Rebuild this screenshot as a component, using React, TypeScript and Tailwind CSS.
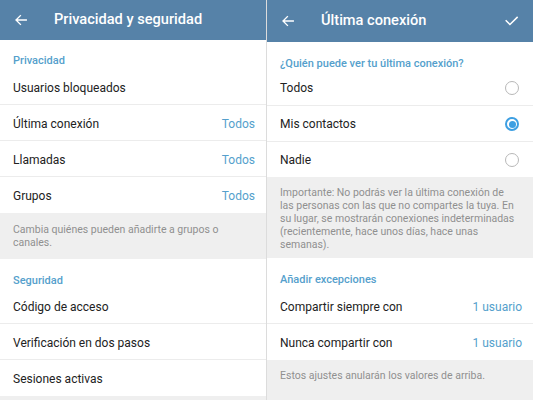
import React from 'react';

const ArrowLeft = () => (
  <svg width="14" height="14" viewBox="0 0 24 24" fill="none" stroke="white" strokeWidth="2.4" strokeLinecap="square">
    <path d="M21 12H4M11 4.5L3.5 12l7.5 7.5" />
  </svg>
);

const Check = () => (
  <svg width="15" height="15" viewBox="0 0 24 24" fill="none" stroke="white" strokeWidth="2.4" strokeLinecap="square">
    <path d="M3.5 12.5l6 6L21 7" />
  </svg>
);

const Header = ({ title, h, check }: { title: string; h: string; check?: boolean }) => (
  <div className={`${h} bg-[#5682a8] flex items-center pl-[14px] pr-[14px]`}>
    <ArrowLeft />
    <span className="ml-[26px] text-[14.6px] font-medium text-white">{title}</span>
    {check && <span className="ml-auto"><Check /></span>}
  </div>
);

const SectionTitle = ({ text, cls }: { text: string; cls: string }) => (
  <div className={`${cls} px-[13px]`}>
    <div className="text-[11px] leading-[14px] font-medium text-[#559fcc]">{text}</div>
  </div>
);

const Row = ({ label, value, last, h = 'h-[36px]' }: { label: string; value?: React.ReactNode; last?: boolean; h?: string }) => (
  <div className={`${h} flex items-center justify-between pl-[13px] pr-[11px] pt-[2px] ${last ? '' : 'border-b border-[#ececec]'}`}>
    <span className="text-[12px] text-[#222]">{label}</span>
    {value && <span className="text-[12px] text-[#559fcc]">{value}</span>}
  </div>
);

const Radio = ({ on }: { on?: boolean }) =>
  on ? (
    <span className="block shrink-0 w-[14px] h-[14px] rounded-full border-2 border-[#3d9fe2] flex items-center justify-center mr-[3px]">
      <span className="block w-[7px] h-[7px] rounded-full bg-[#3d9fe2]" />
    </span>
  ) : (
    <span className="block shrink-0 w-[14px] h-[14px] rounded-full border-[1.5px] border-[#b8b8b8] mr-[3px]" />
  );

const Note = ({ text, cls }: { text: string; cls: string }) => (
  <div className={`${cls} bg-[#efefef] px-[13px] text-[10.5px] leading-[13px] text-[#909090]`}>{text}</div>
);

export default function App() {
  return (
    <div className="w-[533px] h-[400px] overflow-hidden flex bg-[#efefef]" style={{ fontFamily: 'Roboto, "Noto Sans", sans-serif' }}>
      <div className="w-[266px] flex flex-col">
        <Header title="Privacidad y seguridad" h="h-[40px]" />
        <div className="bg-white">
          <SectionTitle text="Privacidad" cls="h-[29px] pt-[14px]" />
          <Row label="Usuarios bloqueados" />
          <Row label="Última conexión" value="Todos" />
          <Row label="Llamadas" value="Todos" />
          <Row label="Grupos" value="Todos" last />
        </div>
        <Note text="Cambia quiénes pueden añadirte a grupos o canales." cls="h-[46px] pt-[10px] pr-[40px]" />
        <div className="bg-white">
          <SectionTitle text="Seguridad" cls="h-[29px] pt-[15px]" />
          <Row label="Código de acceso" />
          <Row label="Verificación en dos pasos" />
          <Row label="Sesiones activas" last />
        </div>
      </div>
      <div className="w-px bg-[#dcdcdc]" />
      <div className="w-[266px] flex flex-col">
        <Header title="Última conexión" h="h-[42px]" check />
        <div className="bg-white">
          <SectionTitle text="¿Quién puede ver tu última conexión?" cls="h-[28px] pt-[15px]" />
          <Row label="Todos" value={<Radio />} />
          <Row label="Mis contactos" value={<Radio on />} />
          <Row label="Nadie" value={<Radio />} last h="h-[35px]" />
        </div>
        <Note
          text="Importante: No podrás ver la última conexión de las personas con las que no compartes la tuya. En su lugar, se mostrarán conexiones indeterminadas (recientemente, hace unos días, hace unas semanas)."
          cls="h-[82px] pt-[9px] pr-[14px]"
        />
        <div className="bg-white">
          <SectionTitle text="Añadir excepciones" cls="h-[30px] pt-[15px]" />
          <Row label="Compartir siempre con" value="1 usuario" h="h-[36px]" />
          <Row label="Nunca compartir con" value="1 usuario" last />
        </div>
        <Note text="Estos ajustes anularán los valores de arriba." cls="h-[40px] pt-[9px]" />
      </div>
    </div>
  );
}
